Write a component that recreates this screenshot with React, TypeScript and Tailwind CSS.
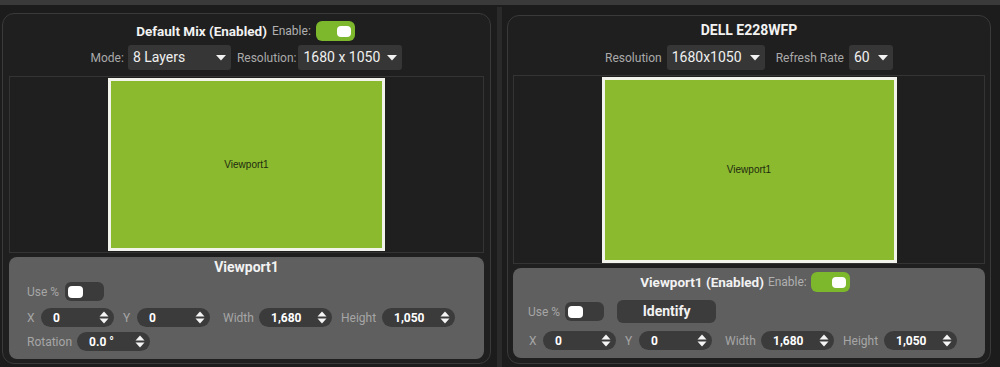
import React from "react";

function Caret() {
  return (
    <svg width="10" height="6" viewBox="0 0 10 6" className="shrink-0">
      <path d="M0 0 L10 0 L5 5.5 Z" fill="#f2f2f2" />
    </svg>
  );
}

function Arrows() {
  return (
    <svg width="10" height="15" viewBox="0 0 10 15" className="shrink-0">
      <path d="M0.5 6.5 L5 1.5 L9.5 6.5 Z" fill="#f5f5f5" />
      <path d="M0.5 8.5 L5 13.5 L9.5 8.5 Z" fill="#f5f5f5" />
    </svg>
  );
}

function Toggle({ on }: { on: boolean }) {
  return on ? (
    <div className="w-[39px] h-[20px] rounded-[6px] bg-[#7db72b] flex items-center justify-end pr-[4px]">
      <div className="w-[14px] h-[11px] rounded-[4px] bg-white" />
    </div>
  ) : (
    <div className="w-[39px] h-[19px] rounded-[6px] bg-[#3b3b3b] flex items-center justify-start pl-[3px]">
      <div className="w-[15px] h-[12px] rounded-[4px] bg-white" />
    </div>
  );
}

function Dropdown({ text, w }: { text: string; w: string }) {
  return (
    <div
      className={`${w} h-[25px] rounded-[3px] bg-[#363636] flex items-center justify-between pl-[5px] pr-[5px] text-[14px] text-[#f0f0f0]`}
    >
      <span>{text}</span>
      <Caret />
    </div>
  );
}

function Spin({ value }: { value: string }) {
  return (
    <div className="w-[73px] h-[19px] rounded-full bg-[#3b3b3b] flex items-center justify-between pl-[12px] pr-[5px]">
      <span className="text-[12px] font-bold text-white">{value}</span>
      <Arrows />
    </div>
  );
}

function Preview({ h, rw, rh }: { h: string; rw: string; rh: string }) {
  return (
    <div className={`${h} border border-[#343434] bg-[#1f1f1f] flex items-center justify-center`}>
      <div
        className={`${rw} ${rh} border-[3px] border-[#f2f4ec] bg-[#8bba2f] flex items-center justify-center`}
      >
        <span className="text-[10px] text-[#1e2a0e] font-['Liberation_Sans',sans-serif]">Viewport1</span>
      </div>
    </div>
  );
}

function FieldRow({ pl }: { pl: string }) {
  return (
    <div className={`flex items-center ${pl} text-[12px] text-[#a6a6a6]`}>
      <span className="w-[8px]">X</span>
      <div className="ml-[6px]">
        <Spin value="0" />
      </div>
      <span className="ml-[9px] w-[8px]">Y</span>
      <div className="ml-[6px]">
        <Spin value="0" />
      </div>
      <span className="ml-[13px] w-[30px]">Width</span>
      <div className="ml-[6px]">
        <Spin value="1,680" />
      </div>
      <span className="ml-[9px] w-[35px]">Height</span>
      <div className="ml-[6px]">
        <Spin value="1,050" />
      </div>
    </div>
  );
}

export default function App() {
  return (
    <div className="w-[1000px] h-[367px] bg-[#1c1c1c] overflow-hidden flex flex-col font-['Roboto',sans-serif]">
      <div className="h-[5px] bg-[#3a3a3a] shrink-0" />
      <div className="flex flex-1 min-h-0">
        {/* Left panel */}
        <div className="ml-[2px] mt-[8px] mb-[3px] w-[489px] rounded-[12px] border border-[#3a3a3a] bg-[#1f1f1f] flex flex-col px-[6px] pt-[6px]">
          <div className="h-[22px] flex items-center justify-center pr-[2px]">
            <span className="text-[13.5px] font-bold text-[#f2f2f2] mr-[5px]">Default Mix (Enabled)</span>
            <span className="text-[12px] text-[#b0b0b0] mr-[5px]">Enable:</span>
            <Toggle on />
          </div>
          <div className="mt-[3px] flex items-center justify-center text-[12px] text-[#aaaaaa]">
            <span className="mr-[4px]">Mode:</span>
            <Dropdown text="8 Layers" w="w-[103px]" />
            <span className="ml-[6px] mr-[2px]">Resolution:</span>
            <Dropdown text="1680 x 1050" w="w-[104px]" />
          </div>
          <div className="mt-[6px]">
            <Preview h="h-[177px]" rw="w-[277px]" rh="h-[173px]" />
          </div>
          <div className="mt-[4px] h-[102px] rounded-[8px] bg-[#5f5f5f] flex flex-col">
            <div className="h-[20px] flex items-center justify-center text-[14px] font-bold text-[#f2f2f2]">
              Viewport1
            </div>
            <div className="mt-[5px] flex items-center pl-[18px] text-[12px] text-[#a6a6a6]">
              <span className="mr-[6px]">Use %</span>
              <Toggle on={false} />
            </div>
            <div className="mt-[7px]">
              <FieldRow pl="pl-[18px]" />
            </div>
            <div className="mt-[5px] flex items-center pl-[18px] text-[12px] text-[#a6a6a6]">
              <span className="mr-[5px]">Rotation</span>
              <Spin value="0.0 °" />
            </div>
          </div>
        </div>

        {/* Separator */}
        <div className="w-[16px] flex justify-center pt-[2px]">
          <div className="w-[5px] h-full bg-[#2a2a2a]" />
        </div>

        {/* Right panel */}
        <div className="mt-[10px] mb-[3px] w-[484px] rounded-[12px] border border-[#3a3a3a] bg-[#1f1f1f] flex flex-col px-[5px] pt-[3px]">
          <div className="h-[22px] flex items-center justify-center">
            <span className="text-[14px] font-bold text-[#f2f2f2]">DELL E228WFP</span>
          </div>
          <div className="mt-[4px] flex items-center justify-center text-[12px] text-[#aaaaaa]">
            <span className="mr-[5px]">Resolution</span>
            <Dropdown text="1680x1050" w="w-[98px]" />
            <span className="ml-[11px] mr-[5px]">Refresh Rate</span>
            <Dropdown text="60" w="w-[44px]" />
          </div>
          <div className="mt-[5px]">
            <Preview h="h-[189px]" rw="w-[295px]" rh="h-[186px]" />
          </div>
          <div className="mt-[4px] h-[90px] rounded-[8px] bg-[#5f5f5f] flex flex-col pt-[4px]">
            <div className="h-[20px] flex items-center justify-center pr-[8px]">
              <span className="text-[13.5px] font-bold text-[#f2f2f2] mr-[4px]">Viewport1 (Enabled)</span>
              <span className="text-[12px] text-[#b0b0b0] mr-[4px]">Enable:</span>
              <Toggle on />
            </div>
            <div className="mt-[8px] flex items-center pl-[15px] text-[12px] text-[#a6a6a6]">
              <span className="mr-[5px]">Use %</span>
              <Toggle on={false} />
              <div className="ml-[13px] w-[99px] h-[23px] rounded-[6px] bg-[#3c3c3c] flex items-center justify-center text-[14px] font-bold text-[#f2f2f2]">
                Identify
              </div>
            </div>
            <div className="mt-[8px]">
              <FieldRow pl="pl-[16px]" />
            </div>
          </div>
        </div>
      </div>
    </div>
  );
}
